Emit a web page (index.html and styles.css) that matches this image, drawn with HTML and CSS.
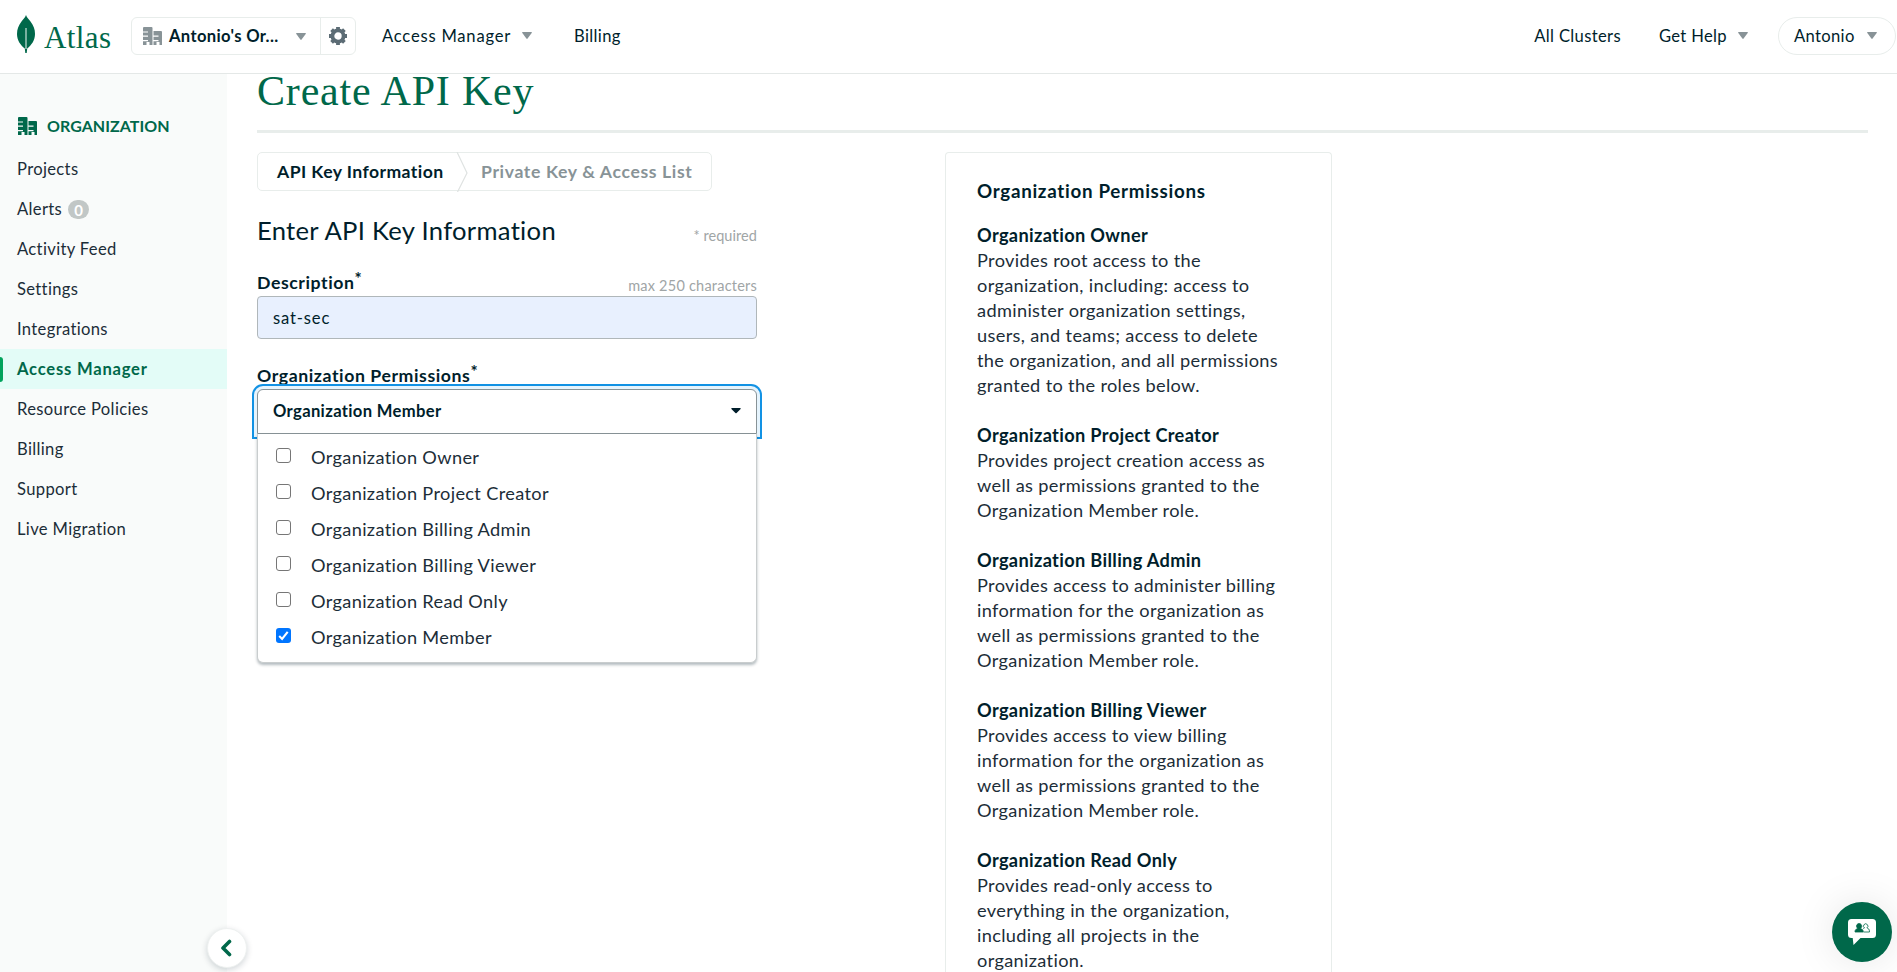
FILE: index.html
```html
<!DOCTYPE html>
<html lang="en">
<head>
<meta charset="utf-8">
<title>Create API Key | Atlas</title>
<link rel="stylesheet" href="styles.css">
</head>
<body>
<svg class="defs" width="0" height="0">
  <symbol id="building" viewBox="0 0 19 18">
    <path d="M1 0h7.500a1 1 0 0 1 1 1v17H6.500v-3H3.500v3H0v-3.800h5v-1.200H0V9.800h5V8.600H0V5.600h5V4.400H0V1a1 1 0 0 1 1-1z"/>
    <path d="M10.500 4H18a1 1 0 0 1 1 1v13h-2.500v-3h-3v3h-3v-3.800h5v-1.200h-5V9.800h5V8.600h-5z"/>
  </symbol>
  <symbol id="caret" viewBox="0 0 10 7"><path d="M.8 0h8.400a.7.700 0 0 1 .5 1.100L5.600 6.600a.8.800 0 0 1-1.200 0L.3 1.100A.7.700 0 0 1 .8 0z"/></symbol>
</svg>
<header class="topbar">
  <div class="logo">
    <svg class="leaf" viewBox="0 0 18 38"><path d="M9 0c.8 2.500 2.600 4 4.500 6.500C16.500 10.500 18 14 18 19c0 6.500-3.500 11-7.800 14.500L9.700 38H8.300l-.5-4.500C3.500 30 0 25.500 0 19 0 14 1.500 10.500 4.500 6.500 6.400 4 8.200 2.500 9 0z" fill="#00684a"/><path d="M9 13v21" stroke="#b9d8ce" stroke-width="1.300"/></svg>
    <span class="wordmark">Atlas</span>
  </div>
  <div class="org-picker">
    <div class="org-name">
      <svg class="building grey"><use href="#building"/></svg>
      <span class="org-label">Antonio's Or...</span>
      <svg class="caret"><use href="#caret"/></svg>
    </div>
    <div class="org-settings">
      <svg class="gear" viewBox="0 0 18 18"><path fill="none" stroke="#5c6c75" stroke-width="3.800" d="M9 3.400a5.600 5.600 0 1 0 0 11.200A5.600 5.600 0 0 0 9 3.400z"/><g stroke="#5c6c75" stroke-width="3.800"><path d="M9 0v3M9 15v3M0 9h3M15 9h3M2.600 2.600l2 2M13.400 13.400l2 2M2.600 15.400l2-2M13.400 4.600l2-2"/></g></svg>
    </div>
  </div>
  <nav class="nav-left">
    <a class="drop"><span class="wide">Access Manager</span><svg class="caret"><use href="#caret"/></svg></a>
    <a>Billing</a>
  </nav>
  <nav class="nav-right">
    <a>All Clusters</a>
    <a class="drop help"><span>Get Help</span><svg class="caret"><use href="#caret"/></svg></a>
    <a class="user"><span>Antonio</span><svg class="caret"><use href="#caret"/></svg></a>
  </nav>
</header>
<div class="shell">
  <aside class="sidebar">
    <div class="side-head"><svg class="building"><use href="#building"/></svg><span>ORGANIZATION</span></div>
    <a class="item">Projects</a>
    <a class="item">Alerts<b class="count">0</b></a>
    <a class="item">Activity Feed</a>
    <a class="item">Settings</a>
    <a class="item">Integrations</a>
    <a class="item active">Access Manager</a>
    <a class="item">Resource Policies</a>
    <a class="item">Billing</a>
    <a class="item">Support</a>
    <a class="item">Live Migration</a>
    <button class="collapse" aria-label="Collapse"><svg viewBox="0 0 12 18"><path d="M9.500 2.500 3 9l6.500 6.500" fill="none" stroke="#00684a" stroke-width="3.600" stroke-linecap="round" stroke-linejoin="round"/></svg></button>
  </aside>
  <main class="main">
    <h1 class="title">Create API Key</h1>
    <div class="columns">
      <section class="form">
        <div class="steps">
          <span class="step on">API Key Information</span>
          <svg class="chev" viewBox="0 0 12 40"><path d="M1 0l10 21L1.500 40" fill="none" stroke="#dfe3e2" stroke-width="1.200"/></svg>
          <span class="step next">Private Key &amp; Access List</span>
        </div>
        <div class="form-head"><h2>Enter API Key Information</h2><span class="hint">* required</span></div>
        <div class="label-row"><label>Description<sup>*</sup></label><span class="hint spaced">max 250 characters</span></div>
        <div class="input">sat-sec</div>
        <div class="label-row second"><label>Organization Permissions<sup>*</sup></label></div>
        <div class="select">
          <div class="select-box"><span>Organization Member</span><svg class="caret dark" viewBox="0 0 10 6"><path d="M.8 0h8.400a.6.600 0 0 1 .4 1L5.600 5a.8.800 0 0 1-1.200 0L.4 1A.6.600 0 0 1 .8 0z"/></svg></div>
          <ul class="menu">
            <li><i class="box"></i>Organization Owner</li>
            <li><i class="box"></i>Organization Project Creator</li>
            <li><i class="box"></i>Organization Billing Admin</li>
            <li><i class="box"></i>Organization Billing Viewer</li>
            <li><i class="box"></i>Organization Read Only</li>
            <li><i class="box checked"><svg viewBox="0 0 15 15"><path d="M3.200 8l2.900 2.900 5.600-7" fill="none" stroke="#fff" stroke-width="2.100"/></svg></i>Organization Member</li>
          </ul>
        </div>
      </section>
      <section class="card">
        <h3>Organization Permissions</h3>
        <div class="role"><b>Organization Owner</b><br>Provides root access to the<br>organization, including: access to<br>administer organization settings,<br>users, and teams; access to delete<br>the organization, and all permissions<br>granted to the roles below.</div>
        <div class="role"><b>Organization Project Creator</b><br>Provides project creation access as<br>well as permissions granted to the<br>Organization Member role.</div>
        <div class="role"><b>Organization Billing Admin</b><br>Provides access to administer billing<br>information for the organization as<br>well as permissions granted to the<br>Organization Member role.</div>
        <div class="role"><b>Organization Billing Viewer</b><br>Provides access to view billing<br>information for the organization as<br>well as permissions granted to the<br>Organization Member role.</div>
        <div class="role last"><b>Organization Read Only</b><br>Provides read-only access to<br>everything in the organization,<br>including all projects in the<br>organization.</div>
      </section>
    </div>
  </main>
</div>
<div class="chat"><svg viewBox="0 0 28 26"><path d="M3.500 0h21A3.500 3.500 0 0 1 28 3.500v12a3.500 3.500 0 0 1-3.500 3.500H12.500L5.500 26l-.8-7H3.500A3.500 3.500 0 0 1 0 15.500v-12A3.500 3.500 0 0 1 3.500 0z" fill="#fff"/><g stroke="#00684a" stroke-width=".8"><path d="M7 13c0-2.500 1.200-3 3-3.500a2.600 2.600 0 1 1 2.200 0c1.800.5 3 1 3 3.500z" fill="#00684a"/><path d="M15.200 9.500c.7-.2 1-.4 1.300-.6a2.200 2.200 0 1 1 2.400 0c1.500.5 2.600 1.100 2.600 4.100h-6" fill="none"/></g></svg></div>
</body>
</html>
```

FILE: styles.css
```css
* { box-sizing: border-box; }
html, body { margin: 0; height: 972px; overflow: hidden; }
body { font-family: Lato, "Open Sans", sans-serif; font-size: 16.600px; letter-spacing: .340px; color: #001e2b; background: #fff; }
h1, h2, h3, ul { margin: 0; padding: 0; font-weight: 400; }
.defs { position: absolute; }

.caret { width: 10px; height: 7px; fill: #889397; flex: none; }
.building { width: 19px; height: 18px; fill: #00684a; flex: none; }
.building.grey { fill: #889397; }

.topbar { display: flex; align-items: flex-start; height: 74px; border-bottom: 1px solid #e4e8e7; padding: 17px 1px 0 17px; }
.logo { display: flex; width: 114px; height: 38px; margin-top: -2px; }
.leaf { width: 18px; height: 38px; }
.wordmark { font: 31px/38px "Liberation Serif", serif; letter-spacing: .4px; color: #00684a; margin: 4px 0 0 9px; }
.org-picker { display: flex; width: 225px; height: 38px; border: 1px solid #e8edeb; border-radius: 6px; }
.org-name { display: flex; align-items: center; width: 189px; padding-left: 11px; border-right: 1px solid #e8edeb; }
.org-label { font-weight: 700; margin-left: 7px; flex: 1; white-space: nowrap; line-height: 20px; letter-spacing: .340px; }
.org-name .caret { margin-right: 14px; }
.org-settings { display: flex; align-items: center; padding-left: 8px; }
.gear { width: 18px; height: 18px; }
.nav-left, .nav-right { display: flex; align-items: center; height: 38px; line-height: 20px; }
.nav-left { margin-left: 26px; gap: 42px; }
.nav-right { margin-left: auto; }
.wide { letter-spacing: .780px; }
.drop { display: flex; align-items: center; gap: 11px; }
.drop .caret, .user .caret { margin-bottom: 1px; }
.help { margin: 0 30px 0 38px; }
.user { display: flex; align-items: center; justify-content: space-between; width: 118px; height: 38px; padding: 0 18px 0 15px; border: 1px solid #e8edeb; border-radius: 19px; }

.shell { display: flex; height: 898px; }
.sidebar { position: relative; width: 227px; flex: none; background: #f9fbfa; padding-top: 32px; }
.side-head { display: flex; align-items: center; gap: 10px; height: 40px; padding-left: 18px; margin-bottom: 3px; font-size: 16px; font-weight: 700; letter-spacing: .05px; color: #00684a; }
.side-head span { padding-bottom: 1px; }
.item { display: flex; align-items: center; height: 40px; padding: 0 0 0 17px; color: #1c2d38; }
.count { display: grid; place-items: center; width: 21px; height: 19px; margin: 1px 0 0 6px; border-radius: 10px; background: #c1c7c6; color: #fff; font-size: 15px; line-height: 18px; letter-spacing: 0; }
.active { background: #e3fcf7; color: #00684a; font-weight: 700; letter-spacing: .780px; position: relative; }
.active::before { content: ""; position: absolute; left: 0; top: 8px; width: 3px; height: 25px; background: #00a35c; border-radius: 0 5px 5px 0; }
.collapse { position: absolute; left: 207px; top: 854px; width: 40px; height: 40px; border: 1px solid #eef1f0; border-radius: 50%; background: #fff; box-shadow: 0 2px 6px rgba(0, 30, 43, .18); display: grid; place-items: center; padding: 0 2px 0 0; }
.collapse svg { width: 12px; height: 18px; }

.main { flex: 1; padding: 0 29px 0 30px; }
.title { height: 59px; border-bottom: 3px solid #e8edeb; font: 42px/35px "Liberation Serif", serif; letter-spacing: .820px; color: #00684a; white-space: nowrap; }
.columns { display: flex; align-items: flex-start; padding-top: 19px; }
.form { width: 500px; flex: none; }
.steps { display: flex; align-items: center; width: 455px; height: 39px; padding-left: 19px; border: 1px solid #e8edeb; border-radius: 5px; font-weight: 700; font-size: 17.600px; white-space: nowrap; }
.step { color: #889397; padding-bottom: 1px; }
.step.on { width: 179px; color: #001e2b; letter-spacing: .430px; }
.next { letter-spacing: .640px; }
.chev { width: 12px; height: 40px; margin-right: 13px; flex: none; }
.form-head { display: flex; justify-content: space-between; height: 40px; margin-top: 24px; }
h2 { font-size: 25.600px; line-height: 31px; letter-spacing: .300px; white-space: nowrap; }
.hint { color: #a0a5a6; font-size: 14.500px; line-height: 20px; letter-spacing: .060px; margin-top: 11px; white-space: nowrap; }
.spaced { letter-spacing: .220px; margin-top: 6px; }
.label-row { display: flex; justify-content: space-between; height: 26px; margin-top: 15px; }
label { font-weight: 700; font-size: 17.700px; line-height: 26px; letter-spacing: .570px; white-space: nowrap; }
sup { font-size: 17px; line-height: 0; letter-spacing: 0; vertical-align: 4px; }
.input { display: flex; align-items: center; height: 43px; padding: 1px 0 0 15px; border: 1px solid #b0b7ba; border-radius: 4px; background: #e8f0fe; letter-spacing: .850px; }
.second { margin-top: 24px; }
.select { position: relative; }
.select-box { display: flex; align-items: center; justify-content: space-between; height: 45px; padding: 0 15px 2px; border: 1px solid #889397; border-radius: 6px 6px 0 0; background: #fff; font-weight: 700; letter-spacing: .340px; box-shadow: 0 0 0 3px #e6f4fd, 0 0 0 5px #1292e4; }
.dark { fill: #001e2b; height: 6px; }
.menu { position: relative; list-style: none; height: 229px; background: #fff; border: 1px solid #c9cdce; border-top: 0; border-radius: 0 0 6px 6px; padding: 5px 0 0 18px; box-shadow: 0 2px 3px rgba(0, 30, 43, .3); font-size: 18.200px; letter-spacing: .340px; }
.menu li { display: flex; height: 36px; line-height: 36px; color: #1c2d38; }
.box { width: 15px; height: 15px; margin: 9px 20px 0 0; border: 1.500px solid #767676; border-radius: 3px; background: #fff; }
.checked { border: 0; background: #0075ff; }
.checked svg { display: block; width: 15px; height: 15px; }

.card { width: 387px; height: 820px; margin-left: 188px; padding: 24px 31px 0; border: 1px solid #e8edeb; border-bottom: 0; border-radius: 4px 4px 0 0; font-size: 18.200px; line-height: 25px; letter-spacing: .340px; white-space: nowrap; color: #1c2d38; }
.card h3 { font-size: 18.800px; line-height: 28px; letter-spacing: .690px; font-weight: 700; margin-bottom: 17.500px; color: #001e2b; }
.card b { color: #001e2b; }
.role { margin-bottom: 25px; }
.role.last { margin-bottom: 0; }

.chat { position: fixed; left: 1832px; top: 902px; width: 60px; height: 60px; border-radius: 50%; background: #00684a; display: grid; place-items: center; box-shadow: 0 0 40px rgba(0, 0, 0, .1); }
.chat svg { width: 28px; height: 26px; }
```
